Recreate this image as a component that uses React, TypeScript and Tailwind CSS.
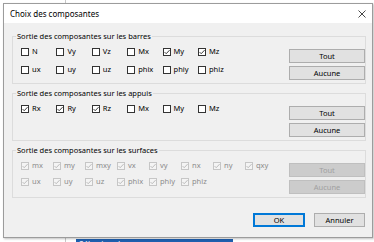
type Item = { label: string; checked: boolean };

const barres: Item[] = [
  { label: "N", checked: false },
  { label: "Vy", checked: false },
  { label: "Vz", checked: false },
  { label: "Mx", checked: false },
  { label: "My", checked: true },
  { label: "Mz", checked: true },
  { label: "ux", checked: false },
  { label: "uy", checked: false },
  { label: "uz", checked: false },
  { label: "phix", checked: false },
  { label: "phiy", checked: false },
  { label: "phiz", checked: false },
];

const appuis: Item[] = [
  { label: "Rx", checked: true },
  { label: "Ry", checked: true },
  { label: "Rz", checked: true },
  { label: "Mx", checked: false },
  { label: "My", checked: false },
  { label: "Mz", checked: false },
];

const surfaces: Item[] = ["mx", "my", "mxy", "vx", "vy", "nx", "ny", "qxy", "ux", "uy", "uz", "phix", "phiy", "phiz"].map(
  (label) => ({ label, checked: true })
);

const Check = ({ item, disabled }: { item: Item; disabled?: boolean }) => {
  return (
    <div className="flex items-center gap-[3px] h-[11px]">
      <span
        className={`w-[8px] h-[8px] border flex items-center justify-center shrink-0 ${
          disabled ? "border-[#c6c6c6] bg-[#f4f4f4]" : "border-[#333333] bg-white"
        }`}
      >
        {item.checked && (
          <svg width="8" height="8" viewBox="0 0 8 8" className="-m-px">
            <polyline
              points="1.6,4.1 3.2,5.7 6.6,2.1"
              fill="none"
              stroke={disabled ? "#b4b4b4" : "#262626"}
              strokeWidth="0.9"
            />
          </svg>
        )}
      </span>
      <span className={disabled ? "text-[#8c8c8c]" : "text-black"}>{item.label}</span>
    </div>
  );
};

const Btn = ({ children, disabled }: { children: string; disabled?: boolean }) => (
  <button
    className={`h-[14px] w-full border text-center leading-[12px] ${
      disabled ? "bg-[#cccccc] border-[#bfbfbf] text-[#a0a0a0]" : "bg-[#e1e1e1] border-[#adadad] text-black"
    }`}
  >
    {children}
  </button>
);

interface groupProps {
  title: string;
  items: Item[];
  cols: string;
  gapY: string;
  disabled?: boolean;
}

const Group = ({ title, items, cols, gapY, disabled }: groupProps) => {
  return (
    <fieldset className="border border-[#dcdcdc] px-0">
      <legend className="ml-[3px] px-[1px] leading-[10px] text-black">{title}</legend>
      <div className="flex items-start pl-[8px]">
        <div className={`grid pt-[5px] ${cols} ${gapY}`}>
          {items.map((item) => (
            <Check key={item.label} item={item} disabled={disabled} />
          ))}
        </div>
        <div className="ml-auto w-[76px] flex flex-col gap-[3px] pt-[8px] pb-[3px]">
          <Btn disabled={disabled}>Tout</Btn>
          <Btn disabled={disabled}>Aucune</Btn>
        </div>
      </div>
    </fieldset>
  );
};

export default function App() {
  return (
    <div className="relative w-[374px] h-[242px] overflow-hidden bg-white font-['Noto_Sans',sans-serif] text-[7.5px]">
      {/* fond : application derrière la boîte */}
      <div className="absolute left-[65px] top-0 h-full w-px bg-[#c8c8c8]" />
      <div className="absolute left-[76px] top-[239px] w-[157px] h-[12px] bg-[#1f5fae] text-white pl-[3px] text-[8px] leading-[12px]">
        Sélection des composantes
      </div>

      <div className="absolute left-[3px] top-[3px] w-[370px] h-[235px] border border-[#9c9c9c] flex flex-col shadow-[1px_1px_2px_rgba(0,0,0,0.25)]">
        <div className="h-[19px] bg-white flex items-center justify-between pl-[6px] pr-[6px]">
          <span className="text-[8px] text-black">Choix des composantes</span>
          <svg width="8" height="8" viewBox="0 0 8 8">
            <path d="M0.5 0.5 L7.5 7.5 M7.5 0.5 L0.5 7.5" stroke="#333" strokeWidth="0.9" />
          </svg>
        </div>

        <div className="flex-1 bg-[#f0f0f0] pl-[8px] pr-[6px] pt-[8px] flex flex-col gap-[4px]">
          <Group title="Sortie des composantes sur les barres" items={barres} cols="grid-cols-[repeat(6,35.4px)]" gapY="gap-y-[7px]" />
          <Group title="Sortie des composantes sur les appuis" items={appuis} cols="grid-cols-[repeat(6,35.4px)]" gapY="gap-y-[7px]" />
          <Group
            title="Sortie des composantes sur les surfaces"
            items={surfaces}
            cols="grid-cols-[repeat(8,32px)]"
            gapY="gap-y-[5px]"
            disabled
          />

          <div className="mt-[11px] flex justify-end gap-[9px] pr-[1px]">
            <button className="w-[52px] h-[14px] border-2 border-[#0078d7] bg-[#e1e1e1] leading-[10px] text-black">OK</button>
            <button className="w-[51px] h-[14px] border border-[#adadad] bg-[#e1e1e1] leading-[12px] text-black">Annuler</button>
          </div>
        </div>
      </div>
    </div>
  );
}
